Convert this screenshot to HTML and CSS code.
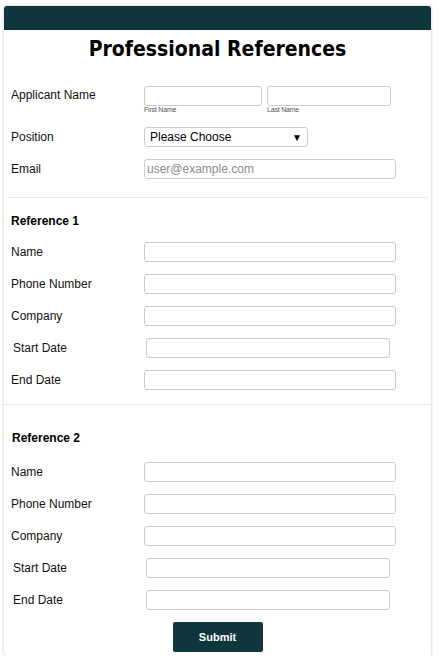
FILE: index.html
```html
<!DOCTYPE html>
<html>
<head>
<meta charset="utf-8">
<link rel="stylesheet" href="styles.css">
</head>
<body>
<div class="card">
  <div class="topbar"></div>
  <h1 class="title">Professional References</h1>
  <form class="form">
    <div class="row row-name">
      <label class="lbl">Applicant Name</label>
      <div class="name-group">
        <div class="name-field">
          <input class="inp inp-first" type="text">
          <span class="sub">First Name</span>
        </div>
        <div class="name-field">
          <input class="inp inp-last" type="text">
          <span class="sub">Last Name</span>
        </div>
      </div>
    </div>
    <div class="row">
      <label class="lbl">Position</label>
      <div class="select">
        <span>Please Choose</span>
        <span class="caret">▼</span>
      </div>
    </div>
    <div class="row">
      <label class="lbl">Email</label>
      <input class="inp inp-wide" type="text" placeholder="user@example.com">
    </div>

    <hr class="divider divider-1">

    <div class="section-title s1">Reference 1</div>
    <div class="row"><label class="lbl">Name</label><input class="inp inp-wide" type="text"></div>
    <div class="row"><label class="lbl">Phone Number</label><input class="inp inp-wide" type="text"></div>
    <div class="row"><label class="lbl">Company</label><input class="inp inp-wide" type="text"></div>
    <div class="row row-shift"><label class="lbl">Start Date</label><input class="inp inp-narrow" type="text"></div>
    <div class="row"><label class="lbl">End Date</label><input class="inp inp-wide" type="text"></div>

    <hr class="divider divider-2">

    <div class="section-title s2">Reference 2</div>
    <div class="row"><label class="lbl">Name</label><input class="inp inp-wide" type="text"></div>
    <div class="row"><label class="lbl">Phone Number</label><input class="inp inp-wide" type="text"></div>
    <div class="row"><label class="lbl">Company</label><input class="inp inp-wide" type="text"></div>
    <div class="row row-shift"><label class="lbl">Start Date</label><input class="inp inp-narrow" type="text"></div>
    <div class="row row-shift"><label class="lbl">End Date</label><input class="inp inp-narrow" type="text"></div>

    <div class="actions">
      <button class="submit" type="button">Submit</button>
    </div>
  </form>
</div>
</body>
</html>
```

FILE: styles.css
```css
* { box-sizing: border-box; }

html, body {
  margin: 0;
  padding: 0;
  background: #ffffff;
}

body {
  font-family: "Liberation Sans", Arial, sans-serif;
  color: #111111;
  padding: 6px 0 0 4px;
}

.card {
  width: 427px;
  background: #ffffff;
  border-radius: 3px;
  box-shadow: 0 0 3px rgba(0, 0, 0, 0.25);
  padding-bottom: 4px;
}

.topbar {
  height: 24px;
  background: #10363d;
  border-radius: 3px 3px 0 0;
}

.title {
  margin: 6px 0 0;
  text-align: center;
  font-family: "DejaVu Sans Condensed", "DejaVu Sans", Verdana, sans-serif;
  font-stretch: condensed;
  font-weight: bold;
  font-size: 21px;
  line-height: 26px;
  color: #000000;
}

.form {
  margin: 24px 0 0;
  padding: 0;
}

.row {
  display: flex;
  align-items: center;
  height: 20px;
  margin: 0 0 12px 7px;
}

.lbl {
  width: 133px;
  flex: none;
  font-size: 12px;
  color: #111111;
}

.row-shift {
  padding-left: 2px;
}

.row-name {
  align-items: flex-start;
  height: 29px;
}

.row-name .lbl {
  line-height: 18px;
}

.name-group {
  display: flex;
  gap: 5px;
}

.name-field {
  display: flex;
  flex-direction: column;
}

.sub {
  font-size: 7px;
  line-height: 8px;
  color: #555555;
  letter-spacing: -0.2px;
}

.inp {
  height: 20px;
  border: 1px solid #cccccc;
  border-radius: 3px;
  background: #ffffff;
  padding: 0 2px;
  font-family: "Liberation Sans", Arial, sans-serif;
  font-size: 12px;
  margin: 0;
  outline: none;
}

.inp::placeholder {
  color: #8a8a8a;
}

.inp-first { width: 118px; }
.inp-last { width: 124px; }
.inp-wide { width: 252px; }
.inp-narrow { width: 244px; }

.select {
  width: 164px;
  height: 20px;
  border: 1px solid #cccccc;
  border-radius: 3px;
  display: flex;
  align-items: center;
  justify-content: space-between;
  padding: 0 5px 0 5px;
  font-size: 12px;
  color: #000000;
}

.caret {
  font-size: 10px;
}

.divider {
  border: 0;
  border-top: 1px solid #e8e8e8;
  margin: 0;
  height: 0;
}

.divider-1 {
  margin: 18px 4px 0 4px;
}

.divider-2 {
  margin: 14px 0 0 0;
}

.section-title {
  font-size: 12px;
  font-weight: bold;
  line-height: 14px;
  color: #000000;
}

.s1 {
  margin: 16px 0 14px 7px;
}

.s2 {
  margin: 26px 0 17px 8px;
}

.actions {
  display: flex;
  justify-content: center;
  margin-top: 0;
}

.submit {
  width: 90px;
  height: 30px;
  background: #10363d;
  color: #ffffff;
  border: 0;
  border-radius: 2px;
  font-family: "Liberation Sans", Arial, sans-serif;
  font-weight: bold;
  font-size: 11px;
}
```
